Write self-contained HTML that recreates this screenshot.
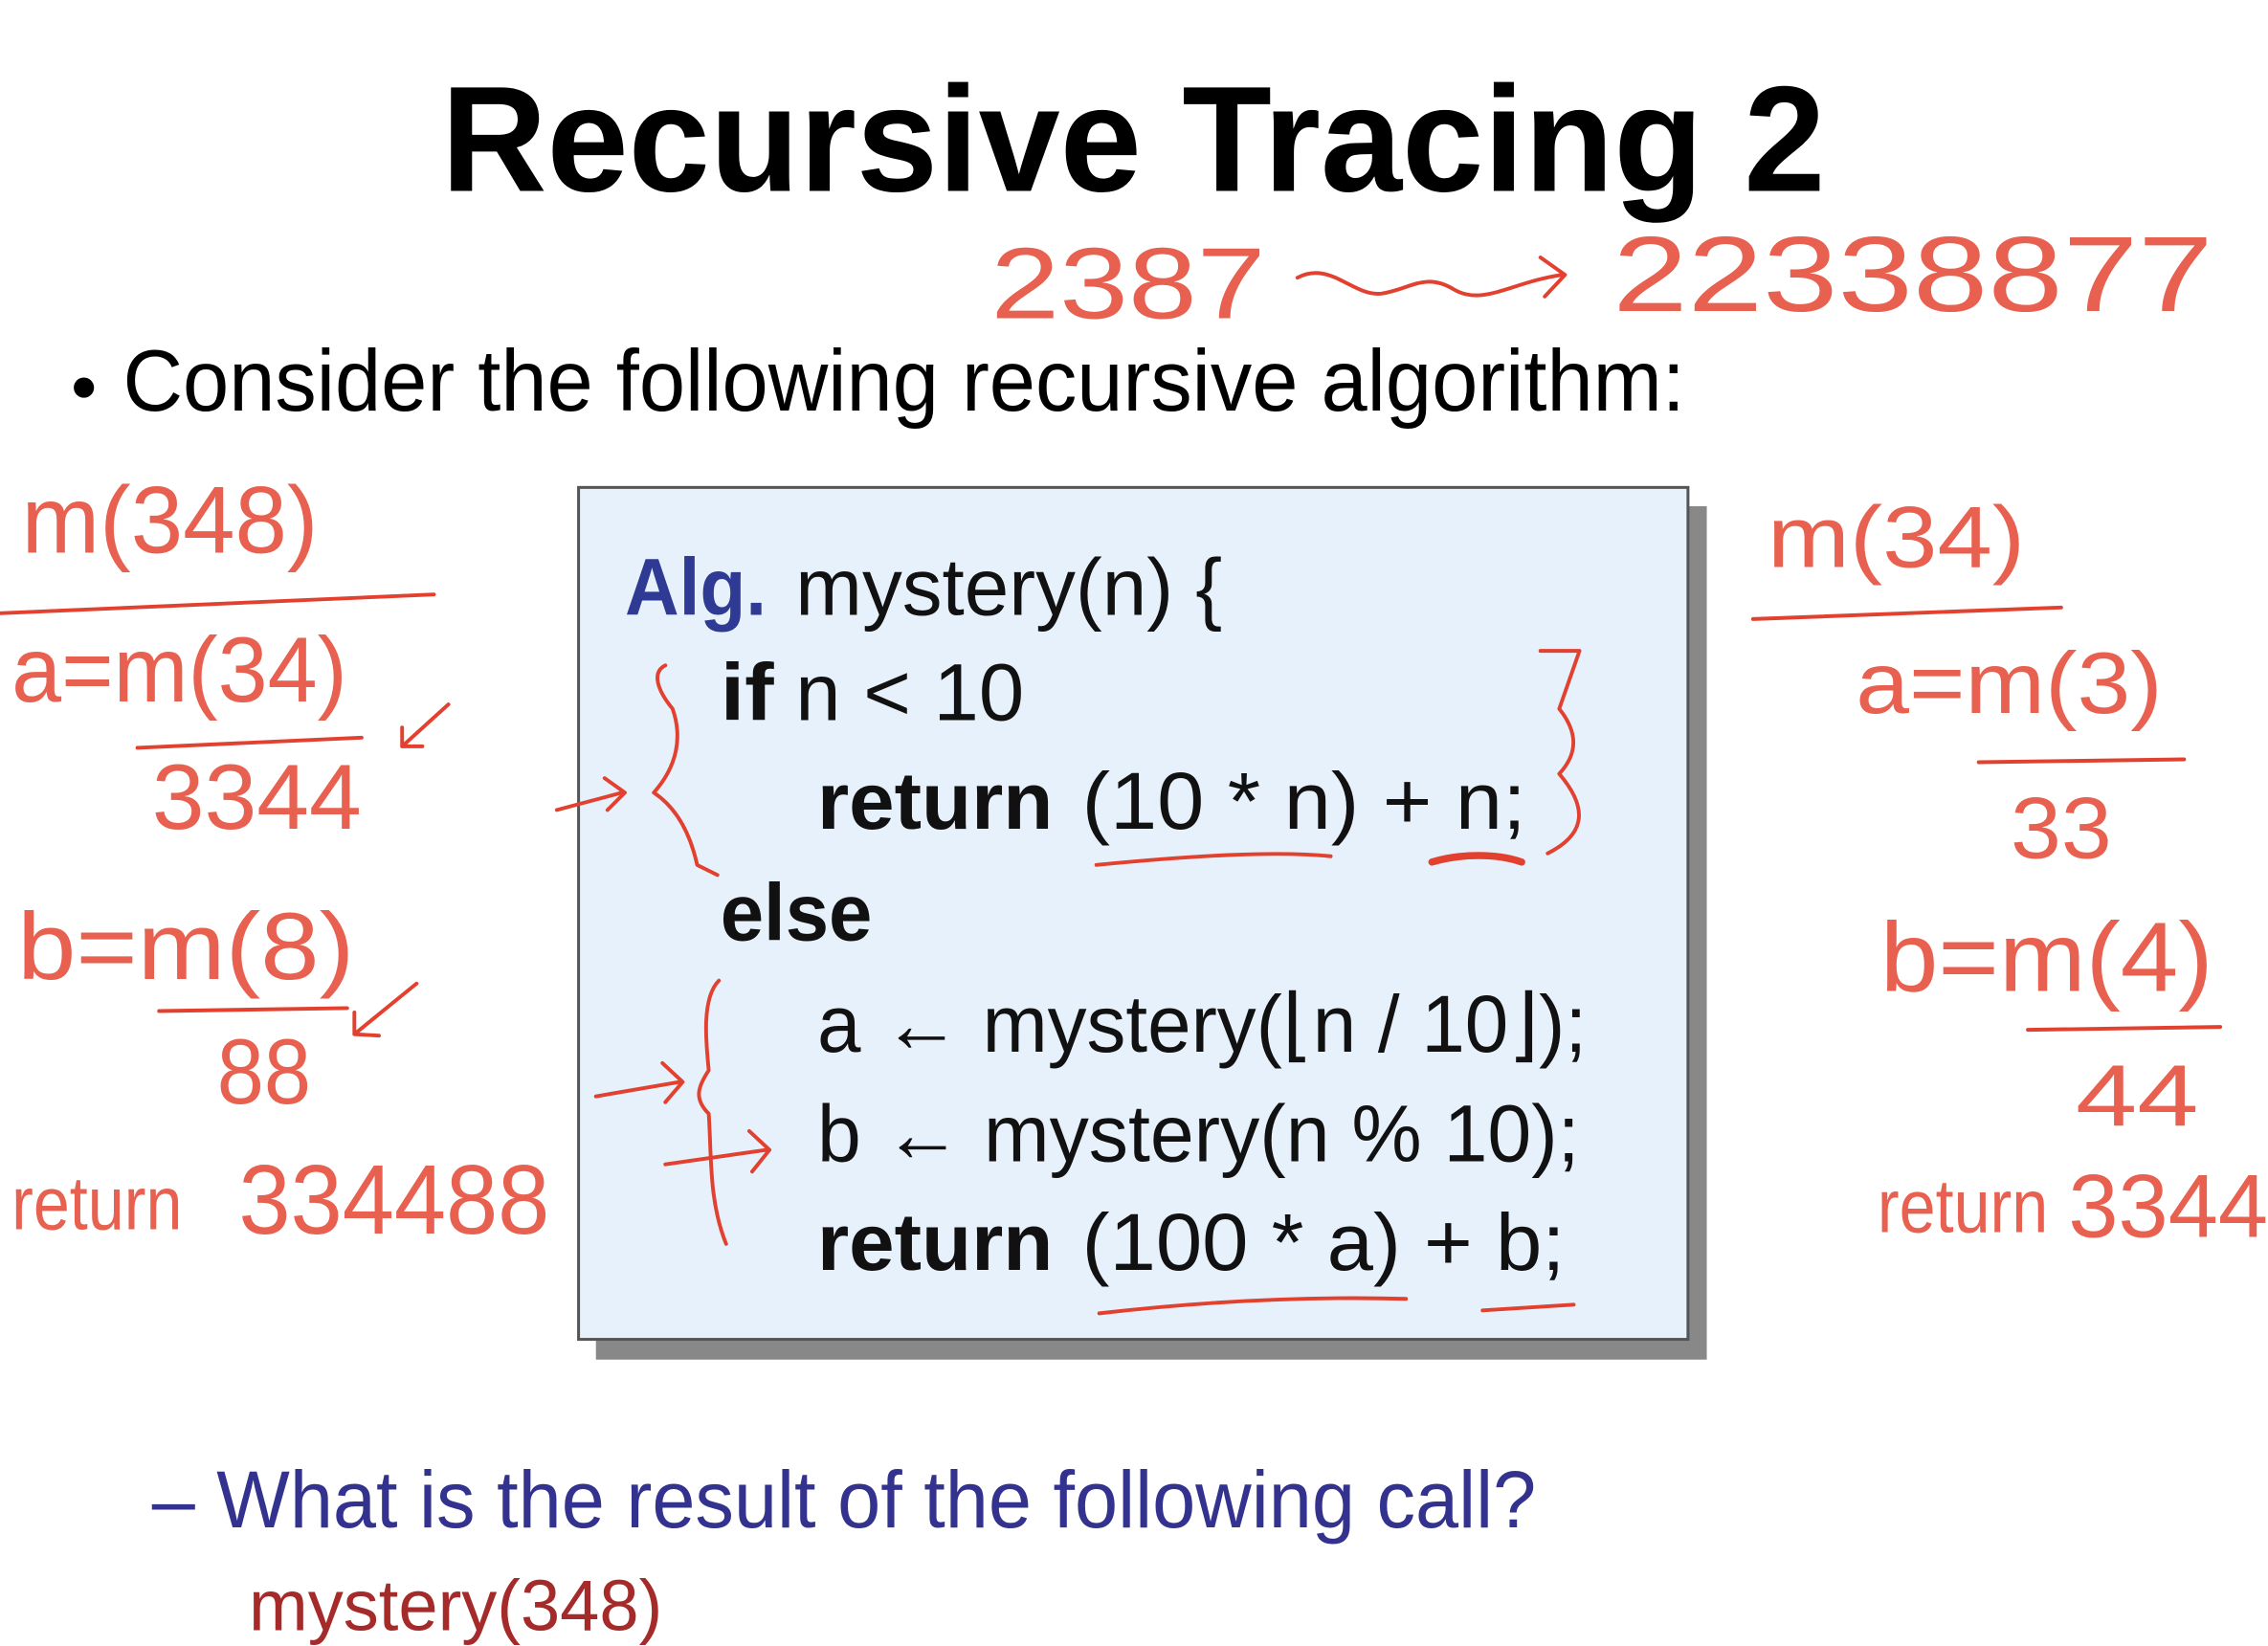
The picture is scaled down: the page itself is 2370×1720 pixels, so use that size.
<!DOCTYPE html>
<html><head><meta charset="utf-8"><style>
html,body{margin:0;padding:0;background:#fff;width:2370px;height:1720px;overflow:hidden}
svg{display:block}
.h{font-family:"Liberation Sans",sans-serif;fill:#e8604f}
.c{font-family:"Liberation Sans",sans-serif;fill:#111}
.r{fill:none;stroke:#e2412f;stroke-width:2.6;stroke-linecap:round;stroke-linejoin:round}
</style></head><body>
<svg width="2370" height="1720" viewBox="0 0 1568 1138" preserveAspectRatio="none" xmlns="http://www.w3.org/2000/svg">
<rect width="1568" height="1138" fill="#fff"/>
<text x="305" y="132" font-family="Liberation Sans,sans-serif" font-weight="bold" font-size="104" textLength="957" lengthAdjust="spacingAndGlyphs" fill="#000">Recursive Tracing 2</text>
<circle cx="58" cy="268" r="7" fill="#000"/>
<text x="85" y="284" font-family="Liberation Sans,sans-serif" font-size="60" textLength="1080" lengthAdjust="spacingAndGlyphs" fill="#000">Consider the following recursive algorithm:</text>
<rect x="412" y="350" width="768" height="590" fill="#888"/>
<rect x="400" y="337" width="767" height="589" fill="#e6f1fb" stroke="#555" stroke-width="2"/>
<g class="c" font-size="56">
<text x="432" y="425" font-weight="bold" fill="#2e3a93" textLength="98" lengthAdjust="spacingAndGlyphs">Alg.</text>
<text x="550" y="425" textLength="295" lengthAdjust="spacingAndGlyphs">mystery(n) {</text>
<text x="498" y="498" font-weight="bold" textLength="37" lengthAdjust="spacingAndGlyphs">if</text>
<text x="550" y="498" textLength="158" lengthAdjust="spacingAndGlyphs">n &lt; 10</text>
<text x="565" y="573" font-weight="bold" textLength="163" lengthAdjust="spacingAndGlyphs">return</text>
<text x="748" y="573" textLength="307" lengthAdjust="spacingAndGlyphs">(10 * n) + n;</text>
<text x="498" y="650" font-weight="bold" textLength="105" lengthAdjust="spacingAndGlyphs">else</text>
<text x="565" y="727" textLength="532" lengthAdjust="spacingAndGlyphs">a ← mystery(⌊n / 10⌋);</text>
<text x="565" y="803" textLength="527" lengthAdjust="spacingAndGlyphs">b ← mystery(n % 10);</text>
<text x="565" y="878" font-weight="bold" textLength="163" lengthAdjust="spacingAndGlyphs">return</text>
<text x="748" y="878" textLength="334" lengthAdjust="spacingAndGlyphs">(100 * a) + b;</text>
</g>
<text x="105" y="1056" font-family="Liberation Sans,sans-serif" font-size="56" fill="#33338f" textLength="957" lengthAdjust="spacingAndGlyphs">– What is the result of the following call?</text>
<text x="172" y="1127" font-family="Liberation Sans,sans-serif" font-size="50" fill="#a52a2a" textLength="286" lengthAdjust="spacingAndGlyphs">mystery(348)</text>
<g class="h">
<text x="685" y="220" font-size="70" textLength="190" lengthAdjust="spacingAndGlyphs">2387</text>
<text x="1115" y="215" font-size="74" textLength="415" lengthAdjust="spacingAndGlyphs">22338877</text>
<text x="15" y="382" font-size="66" textLength="205" lengthAdjust="spacingAndGlyphs">m(348)</text>
<text x="8" y="485" font-size="64" textLength="232" lengthAdjust="spacingAndGlyphs">a=m(34)</text>
<text x="105" y="573" font-size="64" textLength="145" lengthAdjust="spacingAndGlyphs">3344</text>
<text x="12" y="677" font-size="66" textLength="233" lengthAdjust="spacingAndGlyphs">b=m(8)</text>
<text x="150" y="763" font-size="64" textLength="65" lengthAdjust="spacingAndGlyphs">88</text>
<text x="8" y="850" font-size="52" textLength="118" lengthAdjust="spacingAndGlyphs">return</text>
<text x="165" y="853" font-size="68" textLength="215" lengthAdjust="spacingAndGlyphs">334488</text>
<text x="1222" y="392" font-size="60" textLength="178" lengthAdjust="spacingAndGlyphs">m(34)</text>
<text x="1283" y="493" font-size="60" textLength="212" lengthAdjust="spacingAndGlyphs">a=m(3)</text>
<text x="1390" y="593" font-size="60" textLength="70" lengthAdjust="spacingAndGlyphs">33</text>
<text x="1300" y="685" font-size="68" textLength="230" lengthAdjust="spacingAndGlyphs">b=m(4)</text>
<text x="1435" y="778" font-size="60" textLength="85" lengthAdjust="spacingAndGlyphs">44</text>
<text x="1298" y="852" font-size="52" textLength="118" lengthAdjust="spacingAndGlyphs">return</text>
<text x="1430" y="855" font-size="62" textLength="138" lengthAdjust="spacingAndGlyphs">3344</text>
</g>
<g class="r">
<path d="M897 192 C920 180 935 205 955 203 C975 200 985 188 1005 200 C1025 212 1045 195 1080 190 M1065 178 L1082 190 L1068 205"/>
<path d="M0 424 L300 411"/>
<path d="M95 517 L250 510"/>
<path d="M310 487 L278 516 M278 503 L278 516 L292 516"/>
<path d="M110 699 L240 697"/>
<path d="M288 680 L245 715 M245 700 L245 715 L262 716"/>
<path d="M1212 428 L1425 420"/>
<path d="M1368 527 L1510 525"/>
<path d="M1402 712 L1535 710"/>
<path d="M460 460 C450 465 455 478 465 490 C472 510 468 530 452 548 C470 560 478 580 482 598 L496 605"/>
<path d="M385 560 L430 548 M418 538 L432 548 L420 560"/>
<path d="M1065 450 L1092 450 L1078 490 C1090 505 1092 520 1078 535 C1095 555 1100 575 1070 590"/>
<path d="M758 598 C820 592 880 588 920 592"/>
<path d="M990 596 C1010 590 1035 590 1052 596" stroke-width="5"/>
<path d="M497 678 C485 690 488 720 490 740 C482 752 480 760 490 770 C492 800 490 830 502 860"/>
<path d="M412 758 L470 748 M458 735 L472 748 L460 762"/>
<path d="M460 805 L530 795 M518 782 L532 795 L520 810"/>
<path d="M760 908 C830 900 900 896 972 898"/>
<path d="M1025 906 L1088 902"/>
</g>
</svg>
</body></html>
